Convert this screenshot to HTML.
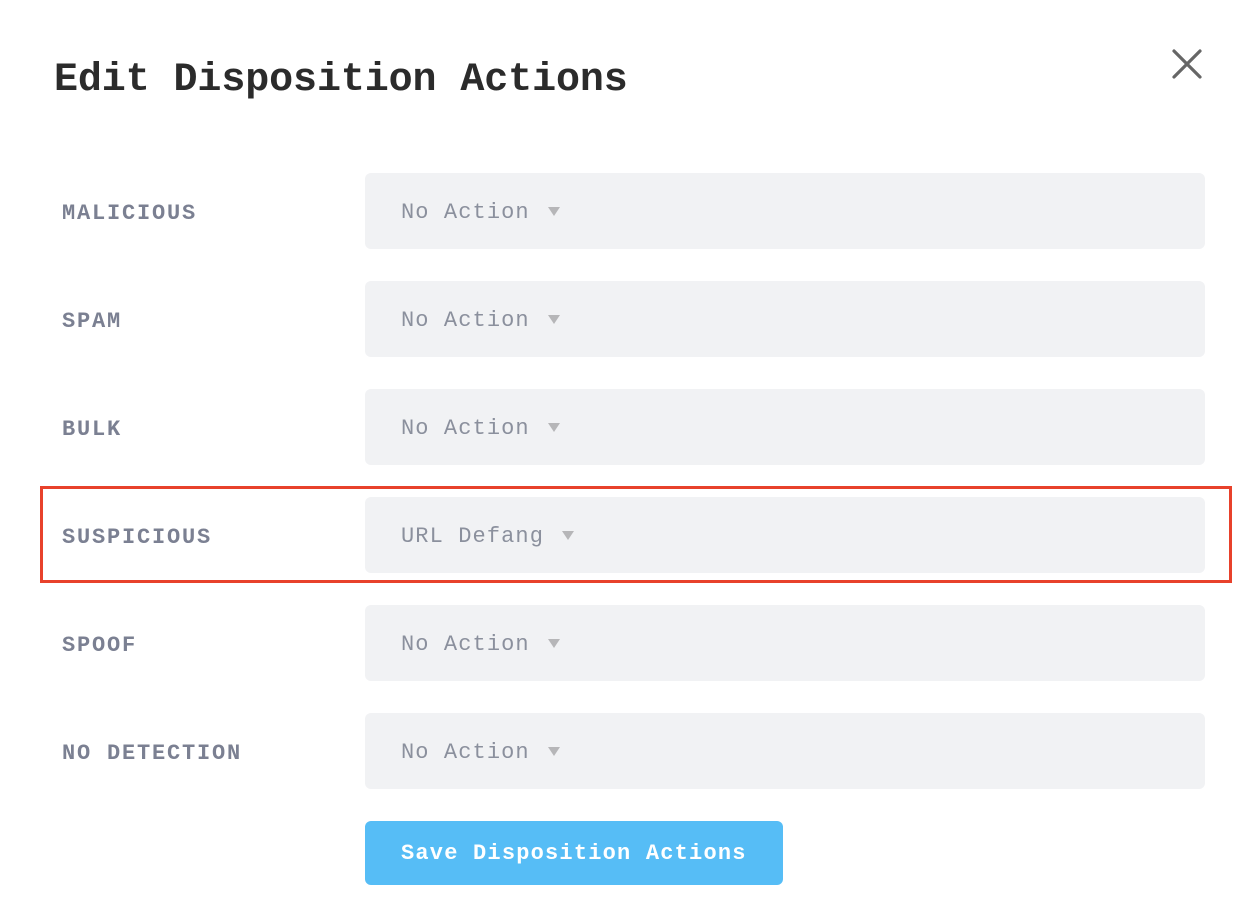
<!DOCTYPE html>
<html><head><style>
body{margin:0;background:#fff;width:1259px;height:915px;position:relative;overflow:hidden;font-family:"Liberation Mono",monospace}
h1{position:absolute;left:54px;top:56px;margin:0;font-size:40px;font-weight:bold;color:#2b2b2b;line-height:50px;letter-spacing:-0.1px}
.lab{position:absolute;left:62px;font-size:22px;font-weight:bold;color:#7b8092;letter-spacing:1.8px;line-height:30px}
.box{position:absolute;left:365px;width:840px;height:76px;background:#f1f2f4;border-radius:6px}
.box span{position:absolute;left:36px;top:25px;font-size:22px;color:#8b909d;letter-spacing:1.1px;line-height:30px}
.box i{display:inline-block;width:0;height:0;border-left:6px solid transparent;border-right:6px solid transparent;border-top:9px solid #b6b6b8;margin-left:18px;vertical-align:2px}
.red{position:absolute;left:40px;top:486px;width:1186px;height:91px;border:3px solid #e8412b}
.btn{position:absolute;left:365px;top:821px;width:418px;height:64px;background:#56bdf6;border-radius:6px;color:#fff;font-size:22px;font-weight:bold;line-height:66px;text-indent:36px;letter-spacing:1.2px}
</style></head><body>
<h1>Edit Disposition Actions</h1>
<svg style="position:absolute;left:1171px;top:48px" width="32" height="32" viewBox="0 0 32 32"><path d="M3 3L29 29M29 3L3 29" stroke="#666" stroke-width="3.2" stroke-linecap="round"/></svg>
<div class="lab" style="top:199px">MALICIOUS</div>
<div class="box" style="top:173px"><span>No Action<i></i></span></div>
<div class="lab" style="top:307px">SPAM</div>
<div class="box" style="top:281px"><span>No Action<i></i></span></div>
<div class="lab" style="top:415px">BULK</div>
<div class="box" style="top:389px"><span>No Action<i></i></span></div>
<div class="red"></div>
<div class="lab" style="top:523px">SUSPICIOUS</div>
<div class="box" style="top:497px"><span>URL Defang<i></i></span></div>
<div class="lab" style="top:631px">SPOOF</div>
<div class="box" style="top:605px"><span>No Action<i></i></span></div>
<div class="lab" style="top:739px">NO DETECTION</div>
<div class="box" style="top:713px"><span>No Action<i></i></span></div>
<div class="btn">Save Disposition Actions</div>
</body></html>
